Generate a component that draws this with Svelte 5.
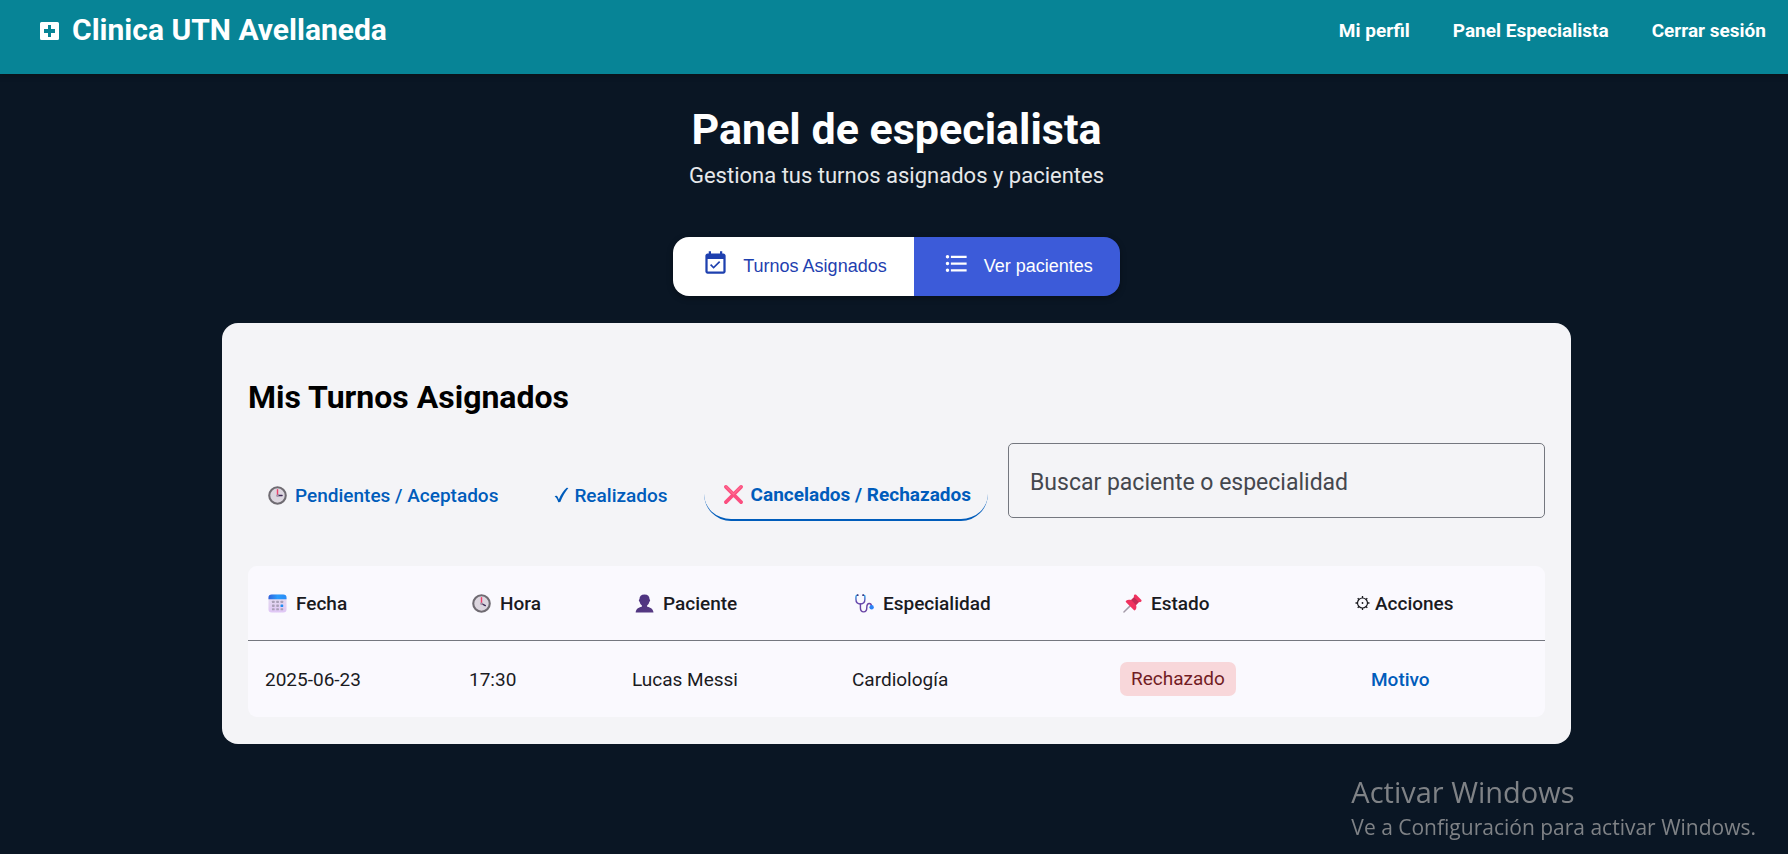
<script>
  const links = ['Mi perfil', 'Panel Especialista', 'Cerrar sesión'];
  const columns = [
    { icon: 'calendar', label: 'Fecha', width: 204 },
    { icon: 'clock4', label: 'Hora', width: 163 },
    { icon: 'person', label: 'Paciente', width: 220 },
    { icon: 'stethoscope', label: 'Especialidad', width: 268 },
    { icon: 'pin', label: 'Estado', width: 235 },
    { icon: 'gear', label: 'Acciones', width: 207 }
  ];
  const total = columns.reduce((sum, c) => sum + c.width, 0);
  const rows = [
    { fecha: '2025-06-23', hora: '17:30', paciente: 'Lucas Messi', especialidad: 'Cardiología', estado: 'Rechazado' }
  ];
  let tab = $state('cancelados');
  let search = $state('');
</script>

{#snippet icon(name)}
  {#if name === 'calendar'}
    <svg class="emoji" viewBox="0 0 20 20" aria-hidden="true">
      <defs>
        <linearGradient id="cal-top" x1="0" x2="1"><stop offset="0" stop-color="#2f62dc" /><stop offset="0.5" stop-color="#2a9bfb" /><stop offset="1" stop-color="#2b8cf6" /></linearGradient>
        <linearGradient id="cal-body" y1="0" y2="1" x2="0"><stop offset="0" stop-color="#e6e1ee" /><stop offset="1" stop-color="#dfc6f5" /></linearGradient>
      </defs>
      <rect x="0.5" y="0.5" width="19" height="19" rx="3.5" fill="url(#cal-body)" />
      <path d="M.5 5.5V4A3.5 3.5 0 0 1 4 .5h12A3.5 3.5 0 0 1 19.500 4v1.500z" fill="url(#cal-top)" />
      <g fill="#aaa0b8">
        <rect x="4.200" y="7" width="2.800" height="2.600" rx=".6" /><rect x="8.700" y="7" width="2.800" height="2.600" rx=".6" /><rect x="13.200" y="7" width="2.800" height="2.600" rx=".6" />
        <rect x="4.200" y="11" width="2.800" height="2.600" rx=".6" /><rect x="8.700" y="11" width="2.800" height="2.600" rx=".6" />
        <rect x="4.200" y="15" width="2.800" height="2.200" rx=".6" /><rect x="8.700" y="15" width="2.800" height="2.200" rx=".6" /><rect x="13.200" y="15" width="2.800" height="2.200" rx=".6" />
      </g>
      <rect x="13.200" y="11" width="2.800" height="2.800" rx=".6" fill="#1d8df2" />
    </svg>
  {:else if name === 'clock3' || name === 'clock4'}
    <svg class="emoji" viewBox="0 0 20 20" aria-hidden="true">
      <circle cx="10" cy="10" r="8.700" fill="#dcd6df" stroke="#6f6b72" stroke-width="2.200" />
      <path d="M10 10.500V4" stroke="#f0406c" stroke-width="1.500" stroke-linecap="round" />
      <path d={name === 'clock3' ? 'M10 10h4.800' : 'M10 10l4 2.200'} stroke="#3d2a55" stroke-width="1.500" stroke-linecap="round" />
      <circle cx="10" cy="10.200" r="1.300" fill="#a79bae" />
    </svg>
  {:else if name === 'person'}
    <svg class="emoji" viewBox="0 0 20 20" aria-hidden="true">
      <defs><linearGradient id="bust" x2="1" y2="1"><stop offset="0" stop-color="#4b3180" /><stop offset="1" stop-color="#573a83" /></linearGradient></defs>
      <path d="M10 .5c3.600 0 5.300 2 5.300 5 .9.300.9 2.300-.2 2.600-.4 1.900-1.200 3-2.300 3.800v1.600c3.800.9 6.200 2.300 6.700 6H.7c.4-3.700 2.700-5.100 6.500-6v-1.600C6.100 11.100 5.300 10 4.900 8.100 3.800 7.800 3.800 5.800 4.700 5.500c0-3 1.700-5 5.300-5z" fill="url(#bust)" />
    </svg>
  {:else if name === 'stethoscope'}
    <svg class="emoji" viewBox="0 0 20 20" aria-hidden="true" fill="none" stroke-linecap="round">
      <defs><linearGradient id="tube" x2="0" y2="1"><stop offset="0" stop-color="#24a8f0" /><stop offset=".7" stop-color="#6647ad" /></linearGradient></defs>
      <path d="M2.800 1.200C1.200 1.200 1 1.600 1 3v2.600c0 3 1.700 4.900 4.700 4.900s4.700-1.900 4.700-4.900V3c0-1.400-.2-1.800-1.800-1.800" stroke="url(#tube)" stroke-width="1.500" />
      <path d="M5.700 10.500v4c0 2.800 1.300 4.300 3.400 4.300 2.400 0 3.300-1.500 3.300-4.300 0-3 .7-4.500 2.600-4.500 1.500 0 2.200 1 2.400 2.700" stroke="#6843a4" stroke-width="1.500" />
      <path d="M2.600 1.200h.4M8.400 1.200h.4" stroke="#473176" stroke-width="1.700" />
      <circle cx="17.500" cy="14" r="2.300" fill="#2c83f7" />
    </svg>
  {:else if name === 'pin'}
    <svg class="emoji" viewBox="0 0 20 20" aria-hidden="true">
      <path d="M7.500 12.500L1 19" stroke="#a39aa8" stroke-width="1.500" stroke-linecap="round" />
      <path d="M12 .8c.6-.6 1.300-.5 1.900.1l5.200 5.200c.6.600.7 1.300.1 1.900-.7.700-1.600.8-2.500.5l-3 3c.7 1.900.6 4-.8 5.400-.5.500-1 .4-1.500 0L3.200 8.700c-.5-.5-.5-1 0-1.500 1.400-1.400 3.500-1.500 5.400-.8l3-3c-.3-.9-.3-1.900.4-2.600z" fill="#f0325f" />
      <path d="M11.600 3.400l5.100 5.100-3 3-5.100-5.100z" fill="#c42b55" />
    </svg>
  {:else if name === 'cross'}
    <svg class="emoji" viewBox="0 0 20 20" aria-hidden="true">
      <path d="M2 2l16 16M18 2L2 18" stroke="#fb4f80" stroke-width="3.800" stroke-linecap="round" />
      <path d="M2 1.700l8 8 8-8" stroke="#ff6c8f" stroke-width="1.200" stroke-linecap="round" fill="none" />
    </svg>
  {:else if name === 'check'}
    <svg class="glyph" viewBox="0 0 15 18" aria-hidden="true">
      <path d="M.6 10.200c1.100-.9 2.500-.7 3.200.8l1 2.400C7 8.500 9.500 4.500 12.700 1.800l1.700.1C11.300 5.500 8.500 10.200 6.300 16l-2 .2c-.9-2.400-1.800-4.700-3.700-6z" fill="currentColor" />
    </svg>
  {:else if name === 'gear'}
    <svg class="glyph" viewBox="0 0 15 18" aria-hidden="true" stroke="currentColor" fill="none">
      <circle cx="7.500" cy="9" r="5" stroke-width="1.200" />
      <circle cx="7.500" cy="9" r=".9" fill="currentColor" stroke="none" />
      <path d="M7.500 4V2M7.500 16v-2M2.500 9h-2M14.500 9h-2M4 5.500L2.700 4.200M11 5.500l1.300-1.300M4 12.500l-1.300 1.300M11 12.500l1.300 1.300" stroke-width="1.300" />
    </svg>
  {/if}
{/snippet}

<header class="topbar">
  <a class="brand" href="#inicio">
    <svg viewBox="0 0 19 18" aria-hidden="true">
      <path fill-rule="evenodd" fill="#fff" d="M1.500 0h16A1.500 1.500 0 0 1 19 1.500v15a1.500 1.500 0 0 1-1.500 1.500h-16A1.500 1.500 0 0 1 0 16.500v-15A1.500 1.500 0 0 1 1.500 0zM8 3v4H4v4h4v4h3v-4h4V7h-4V3z" />
    </svg>
    <span>Clinica UTN Avellaneda</span>
  </a>
  <nav>
    {#each links as link}
      <a href="#{link}">{link}</a>
    {/each}
  </nav>
</header>

<main>
  <h1>Panel de especialista</h1>
  <p class="subtitle">Gestiona tus turnos asignados y pacientes</p>

  <div class="switch">
    <button class="active" type="button">
      <svg viewBox="0 0 24 24" aria-hidden="true"><path fill="currentColor" d="M19 3h-1V1h-2v2H8V1H6v2H5c-1.110 0-1.990.9-1.990 2L3 19c0 1.100.89 2 2 2h14c1.100 0 2-.9 2-2V5c0-1.100-.9-2-2-2zm0 16H5V8h14v11zM16.230 10.820l-1.060-1.060-4.870 4.870-2.110-2.110-1.060 1.060 3.170 3.170z" /></svg>
      Turnos Asignados
    </button>
    <button type="button">
      <svg viewBox="0 0 24 24" aria-hidden="true"><path fill="currentColor" d="M4 10.500c-.83 0-1.500.67-1.500 1.500s.67 1.500 1.500 1.500 1.500-.67 1.500-1.500-.67-1.500-1.500-1.500zm0-6c-.83 0-1.500.67-1.500 1.500S3.170 7.500 4 7.500 5.500 6.830 5.500 6 4.830 4.500 4 4.500zm0 12c-.83 0-1.500.68-1.500 1.500s.68 1.500 1.500 1.500 1.500-.68 1.500-1.500-.67-1.500-1.500-1.500zM7 19h14v-2H7v2zm0-6h14v-2H7v2zm0-8v2h14V5H7z" /></svg>
      Ver pacientes
    </button>
  </div>

  <section class="card">
    <h2>Mis Turnos Asignados</h2>
    <div class="filters">
      <div class="tabs">
        <button type="button" class:selected={tab === 'pendientes'} onclick={() => (tab = 'pendientes')}>{@render icon('clock3')}Pendientes / Aceptados</button>
        <button type="button" class:selected={tab === 'realizados'} onclick={() => (tab = 'realizados')}>{@render icon('check')}Realizados</button>
        <button type="button" class:selected={tab === 'cancelados'} onclick={() => (tab = 'cancelados')}>{@render icon('cross')}Cancelados / Rechazados</button>
      </div>
      <input type="text" aria-label="Buscar paciente o especialidad" placeholder="Buscar paciente o especialidad" bind:value={search} />
    </div>
    <table>
      <colgroup>
        {#each columns as c}<col style:width="{(c.width / total) * 100}%" />{/each}
      </colgroup>
      <thead>
        <tr>
          {#each columns as c}
            <th><span class="head" class:tight={c.icon === 'gear'}>{@render icon(c.icon)}{c.label}</span></th>
          {/each}
        </tr>
      </thead>
      <tbody>
        {#each rows as r}
          <tr>
            <td>{r.fecha}</td>
            <td>{r.hora}</td>
            <td>{r.paciente}</td>
            <td>{r.especialidad}</td>
            <td><span class="badge">{r.estado}</span></td>
            <td><button class="link" type="button">Motivo</button></td>
          </tr>
        {/each}
      </tbody>
    </table>
  </section>
</main>

<aside class="notice">
  <p class="big">Activar Windows</p>
  <p>Ve a Configuración para activar Windows.</p>
</aside>

<style>
  :global(body) {
    background: #0a1624;
    font-family: Roboto, sans-serif;
  }
  h1, h2, p { margin: 0; }
  button {
    border: 0;
    background: none;
    cursor: pointer;
  }
  .topbar {
    display: flex;
    justify-content: space-between;
    box-sizing: border-box;
    height: 74px;
    padding: 8px 22px 0 40px;
    background: #078496;
    color: #fff;
    box-shadow: 0 2px 4px #0b131a;
  }
  .topbar a {
    color: inherit;
    text-decoration: none;
  }
  .brand {
    display: flex;
    align-items: center;
    gap: 13px;
    height: 42px;
    font-size: 30px;
    font-weight: 700;
  }
  .brand svg {
    width: 19px;
    height: 18px;
    margin-top: 4px;
  }
  nav {
    display: flex;
    align-items: center;
    gap: 43px;
    height: 44px;
    font-size: 19px;
    font-weight: 700;
  }
  main {
    display: flex;
    flex-direction: column;
    align-items: center;
    padding: 28px 217px 0 222px;
  }
  h1 {
    color: #fff;
    font-size: 43px;
    line-height: 54px;
    font-weight: 700;
  }
  .subtitle {
    margin-top: 5px;
    color: #e6e8ea;
    font-size: 22px;
    line-height: 30px;
  }
  .switch {
    display: flex;
    margin-top: 46px;
    border-radius: 16px;
    overflow: hidden;
    box-shadow: 0 2px 6px #00000055;
  }
  .switch button {
    display: flex;
    align-items: center;
    gap: 14px;
    height: 59px;
    padding: 0 27px 0 29px;
    background: #3c5bd9;
    color: #fff;
    font: 18px "Liberation Sans", Arial, sans-serif;
  }
  .switch button.active {
    background: #fff;
    color: #1e40af;
  }
  .switch svg {
    width: 27px;
    height: 27px;
    margin-bottom: 6px;
  }
  .card {
    box-sizing: border-box;
    width: 100%;
    margin-top: 27px;
    padding: 54px 26px 27px;
    border-radius: 16px;
    background: #f4f4f7;
  }
  h2 {
    color: #000;
    font-size: 32px;
    line-height: 40px;
    font-weight: 700;
  }
  .filters {
    display: flex;
    align-items: flex-start;
    gap: 20px;
    margin-top: 26px;
  }
  .tabs {
    display: flex;
    gap: 19px;
    padding-top: 24px;
  }
  .tabs button {
    display: flex;
    align-items: center;
    gap: 8px;
    box-sizing: border-box;
    height: 54px;
    padding: 2px 17px 0 20px;
    border-radius: 27px;
    color: #005cbb;
    font: 500 19px Roboto, sans-serif;
    white-space: nowrap;
  }
  .tabs button:nth-child(2) { gap: 5px; }
  .tabs .selected {
    border-bottom: 2px solid #005cbb;
    font-weight: 700;
  }
  .emoji {
    flex: none;
    width: 19px;
    height: 19px;
  }
  .glyph {
    flex: none;
    width: 15px;
    height: 18px;
  }
  input {
    flex: 1;
    min-width: 0;
    box-sizing: border-box;
    height: 75px;
    padding: 4px 21px 0;
    border: 1px solid #74777f;
    border-radius: 5px;
    background: transparent;
    color: #1a1b1f;
    font: 23px Roboto, sans-serif;
  }
  input::placeholder {
    color: #44474e;
    opacity: 1;
  }
  table {
    width: 100%;
    margin-top: 45px;
    border-spacing: 0;
    table-layout: fixed;
    border-radius: 9px;
    background: #faf9fe;
    color: #1a1b1f;
    font-size: 19px;
  }
  th, td {
    height: 74px;
    padding: 0 17px;
    text-align: left;
  }
  th {
    border-bottom: 1px solid #74777f;
    font-weight: 500;
  }
  td { height: 76px; }
  .head {
    display: flex;
    align-items: center;
    gap: 9px;
    padding-left: 3px;
  }
  .head.tight {
    gap: 5px;
    padding-left: 0;
  }
  .badge {
    display: inline-block;
    padding: 0 11px;
    border-radius: 7px;
    background: #f8d7da;
    color: #721c24;
    line-height: 34px;
  }
  .link {
    padding: 0 16px;
    color: #005cbb;
    font: 500 19px Roboto, sans-serif;
  }
  .notice {
    position: fixed;
    right: 32px;
    bottom: 10px;
    color: #7f8286;
    font: 21px/34px "Open Sans", "Segoe UI", sans-serif;
    pointer-events: none;
  }
  .notice .big {
    font-size: 29px;
    line-height: 36px;
  }
</style>
